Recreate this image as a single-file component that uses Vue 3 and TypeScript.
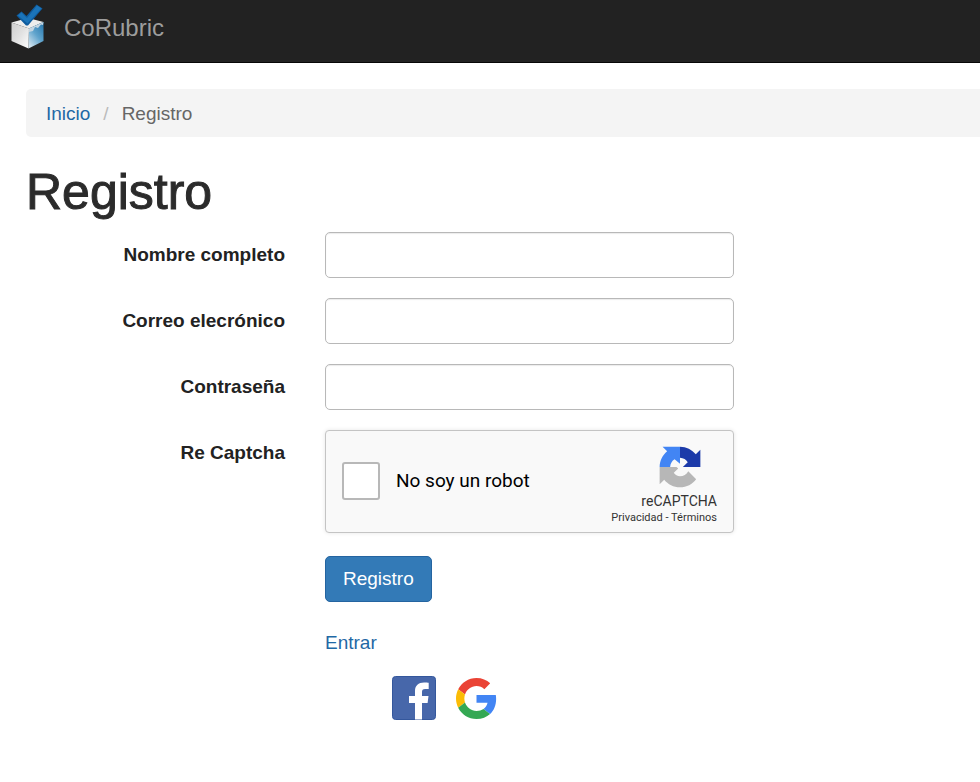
<script setup lang="ts">
import { reactive } from 'vue'

interface Field {
  id: 'name' | 'email' | 'password'
  label: string
  type: string
}

const fields: Field[] = [
  { id: 'name', label: 'Nombre completo', type: 'text' },
  { id: 'email', label: 'Correo elecrónico', type: 'email' },
  { id: 'password', label: 'Contraseña', type: 'password' },
]

const form = reactive({ name: '', email: '', password: '', human: false })
</script>

<template>
  <div class="page">
    <header class="navbar">
      <a class="brand" href="#">
        <svg class="brand-logo" viewBox="0 0 36 46" aria-hidden="true">
          <defs>
            <linearGradient id="cube-left" x1="0" y1="0" x2="1" y2="1">
              <stop offset="0" stop-color="#cecece" />
              <stop offset="0.5" stop-color="#e2e2e2" />
              <stop offset="1" stop-color="#ffffff" />
            </linearGradient>
            <linearGradient id="cube-right" x1="0.9" y1="0" x2="0.2" y2="1">
              <stop offset="0" stop-color="#2878ae" />
              <stop offset="0.5" stop-color="#5fa3cc" />
              <stop offset="1" stop-color="#d3e4ef" />
            </linearGradient>
          </defs>
          <path d="M1.500 17.500 L18 13 L33.500 17 L19 23.500Z" fill="#ededed" />
          <path d="M1.500 17.500 L19 23.500 L18.500 43.500 L1.500 36Z" fill="url(#cube-left)" />
          <path d="M19 23.500 L33.500 17 L33.500 36 L18.500 43.500Z" fill="url(#cube-right)" />
          <path d="M19 23.500 L33.500 17 L33 20 L31 19.500 L28 23 L25 22 L23 26 L19 27Z" fill="#c3d5e2" />
          <path d="M6.500 10.500 L11.500 6.500 L16.500 11 L26.500 -0.500 L32.500 3.500 L18 20.500 L16 20.500Z" fill="#0e5c9f" />
          <path d="M8 10.500 L11.500 7.500 L17 13 L27 0.500 L31.500 3.500 L17.500 18.500Z" fill="#1b74b9" />
        </svg>
        <span>CoRubric</span>
      </a>
    </header>

    <nav class="breadcrumb" aria-label="Ruta">
      <a href="#">Inicio</a>
      <span class="separator">/</span>
      <span>Registro</span>
    </nav>

    <main class="content">
      <h1>Registro</h1>
      <form class="form" @submit.prevent>
        <div v-for="field in fields" :key="field.id" class="row">
          <label class="label" :for="field.id">{{ field.label }}</label>
          <input :id="field.id" v-model="form[field.id]" class="input" :type="field.type" />
        </div>

        <div class="row">
          <label class="label" for="human">Re Captcha</label>
          <div class="captcha">
            <input id="human" v-model="form.human" class="check" type="checkbox" />
            <label class="robot" for="human">No soy un robot</label>
            <div class="captcha-brand">
              <svg class="captcha-logo" viewBox="-1 -1 66 66" aria-hidden="true">
                <path
                  fill="#b7b7b7"
                  d="M0 32v27.300l7.200-7.200C13 59.300 22 64 32 64c10.400 0 19.600-5 25.400-12.700L45 38.500C42 43.500 37.500 46.500 32 46.500c-4 0-7.500-2-9.800-5.500l7-6.500L26.500 32Z"
                />
                <path
                  fill="#1c3aa9"
                  d="M64 32V4.700l-7.200 7.200C51 4.700 42 0 32 0v17.500c5.500.3 9.800 3 12.200 7.200L36.500 32Z"
                />
                <path
                  fill="#4285f4"
                  d="M32 0H4.600l7.200 7.200C4.600 13 0 22 0 32h16.500c.3-5.500 3-9.800 7-12.200L32 27Z"
                />
              </svg>
              <span class="captcha-name">reCAPTCHA</span>
              <span class="captcha-links">
                <a href="#">Privacidad</a> - <a href="#">Términos</a>
              </span>
            </div>
          </div>
        </div>

        <div class="row">
          <div class="actions">
            <button class="submit" type="submit">Registro</button>
            <a class="login" href="#">Entrar</a>
            <div class="social">
              <a href="#" aria-label="Facebook">
                <svg class="facebook" viewBox="0 0 44 44" aria-hidden="true">
                  <rect x="0.5" y="0.5" width="43" height="43" rx="3" fill="#4767aa" stroke="#34579c" />
                  <path
                    d="M23 43.500V27h-6v-7h6v-5C23 9.500 26.500 6.500 32 6.500c2 0 4 .1 4.700.3v6.200h-3.500c-2.500 0-3.200 1.200-3.200 3V20h6.500l-.9 7H30v16.500Z"
                    fill="#fff"
                  />
                </svg>
              </a>
              <a href="#" aria-label="Google">
                <svg class="google" viewBox="0 0 48 48" aria-hidden="true">
                  <path fill="#EA4335" d="M24 9.500c3.540 0 6.710 1.220 9.210 3.600l6.850-6.850C35.900 2.380 30.470 0 24 0 14.620 0 6.510 5.380 2.560 13.220l7.980 6.190C12.430 13.720 17.740 9.500 24 9.500z" />
                  <path fill="#4285F4" d="M46.980 24.550c0-1.570-.15-3.090-.38-4.550H24v9.020h12.940c-.58 2.960-2.260 5.480-4.780 7.180l7.730 6c4.510-4.180 7.090-10.360 7.090-17.650z" />
                  <path fill="#FBBC05" d="M10.530 28.590c-.48-1.450-.76-2.990-.76-4.590s.27-3.140.76-4.590l-7.980-6.190C.92 16.460 0 20.120 0 24c0 3.880.92 7.540 2.560 10.780l7.970-6.190z" />
                  <path fill="#34A853" d="M24 48c6.480 0 11.930-2.130 15.890-5.810l-7.730-6c-2.150 1.450-4.920 2.300-8.160 2.300-6.260 0-11.570-4.220-13.470-9.910l-7.980 6.190C6.510 42.620 14.620 48 24 48z" />
                </svg>
              </a>
            </div>
          </div>
        </div>
      </form>
    </main>
  </div>
</template>

<style>
body {
  background: #fff;
}
</style>

<style scoped>
.page {
  font-family: "Liberation Sans", Arial, sans-serif;
  font-size: 19px;
  line-height: 26px;
  color: #2b2b2b;
  padding-bottom: 24px;
}

.page *,
.page {
  box-sizing: border-box;
}

a {
  color: #1f68a5;
  text-decoration: none;
}

.navbar {
  display: flex;
  background: #222;
  border-bottom: 1px solid #080808;
  height: 63px;
  padding: 4px 10px;
}

.brand {
  display: flex;
  gap: 18px;
  height: 48px;
  align-items: center;
  color: #9d9d9d;
  font-size: 24px;
}

.brand-logo {
  width: 36px;
  height: 46px;
  overflow: visible;
}

.breadcrumb {
  display: flex;
  gap: 13px;
  margin: 26px 0 0 26px;
  padding: 12px 20px 10px;
  background: #f4f4f4;
  border-radius: 5px 0 0 5px;
  color: #666;
}

.separator {
  color: #bbb;
}

.content {
  padding: 28px 26px 0;
}

h1 {
  margin: 0;
  font-size: 50px;
  line-height: 54px;
  font-weight: 400;
  -webkit-text-stroke: 1px currentColor;
}

.form {
  display: grid;
  gap: 20px;
  margin-top: 13px;
}

.row {
  display: grid;
  grid-template-columns: 259px minmax(0, 409px);
  column-gap: 40px;
}

.label {
  padding-top: 10px;
  text-align: right;
  font-weight: 700;
  color: #222;
}

.input {
  width: 100%;
  height: 46px;
  padding: 8px 16px;
  font: inherit;
  color: #555;
  background: #fff;
  border: 1px solid #b8b8b8;
  border-radius: 5px;
  box-shadow: inset 0 1px 1px rgba(0, 0, 0, 0.08);
}

.captcha {
  display: flex;
  align-items: center;
  height: 103px;
  padding: 0 16px;
  background: #f9f9f9;
  border: 1px solid #c4c4c4;
  border-radius: 4px;
  box-shadow: 0 0 4px rgba(0, 0, 0, 0.1);
  font-family: Roboto, sans-serif;
}

.check {
  appearance: none;
  flex: none;
  width: 38px;
  height: 38px;
  margin: 0 16px 2px 0;
  background: #fff;
  border: 2px solid #b8b8b8;
  border-radius: 3px;
}

.check:checked {
  background: #4285f4;
}

.robot {
  padding-bottom: 2px;
  color: #000;
}

.captcha-brand {
  display: flex;
  flex-direction: column;
  align-items: flex-end;
  margin-left: auto;
  padding-top: 7px;
  color: #333;
}

.captcha-logo {
  width: 42px;
  height: 42px;
  margin-right: 16px;
}

.captcha-name {
  margin-top: 3px;
  font-size: 14px;
  line-height: 20px;
}

.captcha-links {
  font-size: 11px;
  line-height: 13px;
}

.captcha-links a {
  color: inherit;
}

.actions {
  grid-column: 2;
  display: flex;
  flex-direction: column;
  align-items: flex-start;
  padding-top: 3px;
}

.submit {
  height: 46px;
  padding: 0 17px;
  font: inherit;
  color: #fff;
  background: #337ab7;
  border: 1px solid #2464a0;
  border-radius: 5px;
}

.login {
  margin-top: 28px;
}

.social {
  display: flex;
  align-items: center;
  gap: 20px;
  margin: 20px 0 0 67px;
}

.social a {
  display: flex;
}

.facebook {
  width: 44px;
  height: 44px;
}

.google {
  width: 41px;
  height: 41px;
}
</style>
